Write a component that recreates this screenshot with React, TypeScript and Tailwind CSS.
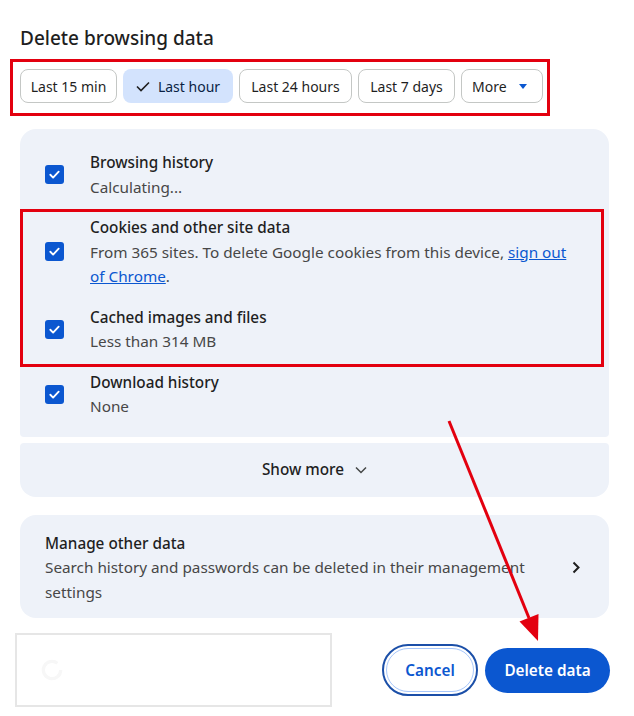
import React from 'react';

interface Row {
  title: string;
  detail: React.ReactNode;
}

const CheckBox: React.FC = () => (
  <div className="w-[19px] h-[19px] shrink-0 rounded-[3px] bg-[#0b57d0] flex items-center justify-center">
    <svg width="13" height="13" viewBox="0 0 14 14" fill="none">
      <path d="M2.5 7.3l3 3 6-6.3" stroke="white" strokeWidth="2" strokeLinecap="round" strokeLinejoin="round" />
    </svg>
  </div>
);

const DataRow: React.FC<Row> = ({ title, detail }) => (
  <div className="flex items-center gap-[26px]">
    <CheckBox />
    <div className="max-w-[488px] leading-[24.5px] text-[15.3px]">
      <div className="font-medium text-[#1f1f1f]">{title}</div>
      <div className="text-[#474747]">{detail}</div>
    </div>
  </div>
);

const ranges = [
  { label: 'Last 15 min', w: 'w-[97px]' },
  { label: 'Last hour', w: 'w-[110px]', active: true },
  { label: 'Last 24 hours', w: 'w-[113px]' },
  { label: 'Last 7 days', w: 'w-[97px]' },
];

export default function App() {
  return (
    <div className="relative w-[634px] h-[716px] overflow-hidden bg-white font-['Noto_Sans',sans-serif] text-[#1f1f1f]">
      <div className="pl-5 pr-[25px] pt-[26px]">
        <h1 className="text-[19px] leading-6 font-medium">Delete browsing data</h1>

        {/* Time range chips (red annotation box) */}
        <div className="mt-[9px] -ml-[10px] w-[540px] border-[3px] border-[#e3000f] pl-[7px] pt-[7px] pb-[10px] flex gap-[6px]">
          {ranges.map((r) => (
            <div
              key={r.label}
              className={`${r.w} h-[34px] rounded-lg flex items-center justify-center gap-2 text-[14px] ${
                r.active ? 'bg-[#d3e3fd] text-[#0a1f44]' : 'border border-[#c4c7c5] text-[#1f1f1f]'
              }`}
            >
              {r.active && (
                <svg width="14" height="11" viewBox="0 0 14 11" fill="none">
                  <path d="M1 5.5l4 4L13 1.5" stroke="#1f1f1f" strokeWidth="1.6" />
                </svg>
              )}
              {r.label}
            </div>
          ))}
          <div className="w-[82px] h-[34px] rounded-lg border border-[#c4c7c5] flex items-center gap-[12px] pl-[10px] text-[14px]">
            More
            <svg width="8" height="5" viewBox="0 0 8 5">
              <path d="M0 0h8L4 5z" fill="#0b57d0" />
            </svg>
          </div>
        </div>

        {/* Data types */}
        <div className="mt-[13px] bg-[#eef2f9] rounded-t-2xl rounded-b-[4px] pl-[25px] pr-[20px] pt-[21px] pb-[18px] flex flex-col gap-4">
          <DataRow title="Browsing history" detail="Calculating..." />
          <div className="relative flex flex-col gap-4">
            <DataRow
              title="Cookies and other site data"
              detail={
                <>
                  From 365 sites. To delete Google cookies from this device,{' '}
                  <span className="text-[#0b57d0] underline">sign out of Chrome</span>.
                </>
              }
            />
            <DataRow title="Cached images and files" detail="Less than 314 MB" />
            <div className="absolute top-[-6px] bottom-[-13px] left-[-25px] right-[-15px] border-[3px] border-[#e3000f]" />
          </div>
          <DataRow title="Download history" detail="None" />
        </div>

        <div className="mt-[6px] h-[54px] bg-[#eef2f9] rounded-t-[4px] rounded-b-2xl flex items-center justify-center gap-[11px] text-[15.3px] font-medium">
          Show more
          <svg width="12" height="8" viewBox="0 0 12 8" fill="none">
            <path d="M1 1.5l5 5 5-5" stroke="#444746" strokeWidth="1.5" />
          </svg>
        </div>

        {/* Manage other data */}
        <div className="mt-[18px] bg-[#eef2f9] rounded-2xl pl-[25px] pr-[29px] pt-[16px] pb-[14px] flex items-center justify-between">
          <div className="w-[485px] text-[15.3px] leading-[24.5px]">
            <div className="font-medium">Manage other data</div>
            <div className="text-[#474747]">Search history and passwords can be deleted in their management settings</div>
          </div>
          <svg width="8" height="13" viewBox="0 0 8 13" fill="none">
            <path d="M1.5 1.5l5 5-5 5" stroke="#1f1f1f" strokeWidth="2" />
          </svg>
        </div>

        {/* Footer */}
        <div className="mt-[15px] flex items-center">
          <div className="-ml-[5px] w-[317px] h-[74px] border-2 border-[#e6e6e6] flex items-center pl-[22px]">
            <svg width="26" height="26" viewBox="0 0 24 24" fill="none">
              <path d="M20 12a8 8 0 1 1-3-6.2" stroke="#f7f7f7" strokeWidth="3" />
            </svg>
          </div>
          <div className="ml-auto -mr-px flex items-center gap-[11px]">
            <button className="w-[88px] h-[44px] rounded-full border border-[#a8c7fa] outline-2 outline-offset-2 outline-[#1b4fa8] text-[#0b57d0] text-[15.3px] font-semibold">
              Cancel
            </button>
            <button className="w-[125px] h-[45px] rounded-full bg-[#0b57d0] text-white text-[15.3px] font-semibold">
              Delete data
            </button>
          </div>
        </div>
      </div>

      {/* Red annotation arrow */}
      <svg className="absolute inset-0 pointer-events-none" width="634" height="716" viewBox="0 0 634 716">
        <line x1="449" y1="421" x2="529" y2="618" stroke="#e3000f" strokeWidth="3" />
        <path d="M538 641L519.5 621.5L538.5 614z" fill="#e3000f" />
      </svg>
    </div>
  );
}
